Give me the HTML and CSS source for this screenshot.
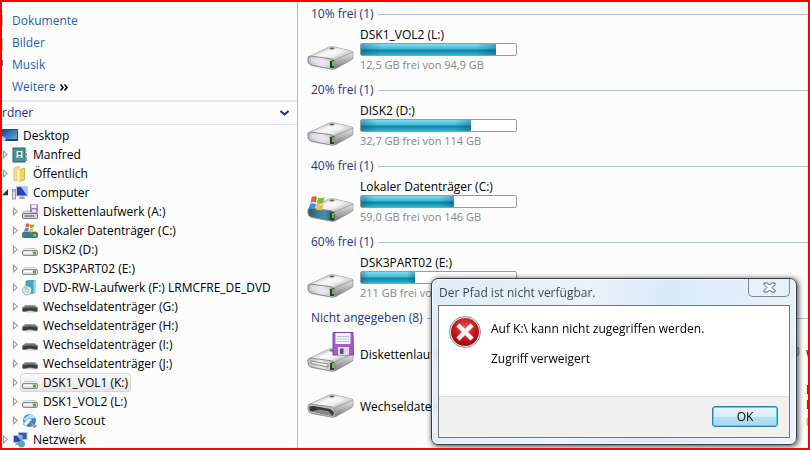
FILE: index.html
```
<!DOCTYPE html>
<html lang="de">
  <head>
    <meta charset="UTF-8" />
    <meta name="viewport" content="width=device-width, initial-scale=1.0" />
    <title>Computer</title>
    <link rel="stylesheet" href="styles.css">
  </head>
  <body>
    <!-- shared icons -->
    <svg class="defs" width="0" height="0" aria-hidden="true">
      <defs>
        <linearGradient id="metal" x1="0" y1="0" x2="1" y2="1">
          <stop offset="0" stop-color="#9d9d9d" />
          <stop offset="0.45" stop-color="#f4f4f4" />
          <stop offset="1" stop-color="#aaa" />
        </linearGradient>
        <linearGradient id="side" x1="0" y1="0" x2="0" y2="1">
          <stop offset="0" stop-color="#e8e8e8" />
          <stop offset="1" stop-color="#777" />
        </linearGradient>
        <linearGradient id="front" x1="0" y1="0" x2="1" y2="0">
          <stop offset="0" stop-color="#b9b9bb" />
          <stop offset="0.5" stop-color="#ececf2" />
          <stop offset="1" stop-color="#b0b0b0" />
        </linearGradient>
        <linearGradient id="teal" x1="0" y1="0" x2="1" y2="0">
          <stop offset="0" stop-color="#2a5b6b" />
          <stop offset="0.6" stop-color="#3f93a8" />
          <stop offset="1" stop-color="#225060" />
        </linearGradient>
        <linearGradient id="screen" x1="0" y1="0" x2="1" y2="1">
          <stop offset="0" stop-color="#1c3fa0" />
          <stop offset="1" stop-color="#6fb4ec" />
        </linearGradient>
        <radialGradient id="red" cx="0.5" cy="0.35" r="0.7">
          <stop offset="0" stop-color="#e85a5a" />
          <stop offset="0.6" stop-color="#c41218" />
          <stop offset="1" stop-color="#8e0a0e" />
        </radialGradient>

        <symbol id="body" viewBox="0 0 48 28">
          <path d="M3 20 L26 26 L46 15 L46 12 L27 26 L4 22Z" fill="#777" opacity="0.5" />
          <path d="M1 13 L22 3 Q25 2 28 3 L45 7 Q47 8 45 9 L27 17 L2 14Z" fill="url(#metal)" stroke="#a0a0a0" stroke-width="0.7" />
          <path d="M9 12 L24 5 L38 8 L25 14Z" fill="#fff" opacity="0.45" />
          <path d="M27 16 L46 8 L46 14 Q46 15 44 16 L28 25Z" fill="url(#side)" stroke="#888" stroke-width="0.6" />
          <ellipse cx="25" cy="4.5" rx="2.5" ry="1" fill="#666" />
        </symbol>
        <symbol id="led" viewBox="0 0 48 28">
          <path d="M23 17 L27 16 L27 24 L23 24Z" fill="#303c2c" />
          <path d="M25 17 L27 17 L27 22 L25 22Z" fill="#4bd02e" />
        </symbol>
        <symbol id="hdd" viewBox="0 0 48 28">
          <use href="#body" />
          <path d="M1 14 Q1 12 4 12 L25 15 Q28 16 28 19 L28 24 Q27 26 24 25 L4 21 Q1 20 1 17Z" fill="url(#front)" stroke="#858585" stroke-width="0.9" />
          <path d="M4 14 L22 17 L22 22 L4 18Z" fill="#e6e6f2" opacity="0.8" />
          <use href="#led" />
        </symbol>
        <symbol id="flag" viewBox="0 0 16 14">
          <path d="M3 1 Q6 -0.5 8 1 L7 6 Q4 5 2 6.500Z" fill="#e4632c" />
          <path d="M9 1.500 Q12 3 15 1 L14 6 Q11 8 8 6.500Z" fill="#7dbb3c" />
          <path d="M1.500 7.500 Q4 6 7 7.500 L6 12 Q3 11 0 12.500Z" fill="#3f8edb" />
          <path d="M8 8 Q11 9.500 14 7.500 L13 12.500 Q10 14 7 12.500Z" fill="#f6bf2c" />
        </symbol>
        <symbol id="hdd-win" viewBox="0 0 48 28">
          <use href="#body" />
          <path d="M1 14 Q1 12 4 12 L25 15 Q28 16 28 19 L28 24 Q27 26 24 25 L4 21 Q1 20 1 17Z" fill="url(#teal)" stroke="#888" stroke-width="1" />
          <use href="#led" />
          <use href="#flag" x="1" y="0" width="18" height="15" />
        </symbol>
        <symbol id="removable" viewBox="0 0 48 28">
          <use href="#body" />
          <path d="M1 14 Q1 12 4 12 L25 15 Q28 16 28 19 L28 24 Q27 26 24 25 L4 21 Q1 20 1 17Z" fill="#bdbdbd" stroke="#8a8a8a" stroke-width="0.800" />
          <path d="M2 15 Q4 13.500 7 14 L23 17 Q26 18 27 21 L26 24 L3 19Z" fill="#383838" />
          <path d="M5 19.500 L12 17.500 L21 19 L26 24Z" fill="#8a8a8a" />
        </symbol>
        <symbol id="disk" viewBox="0 0 22 24">
          <path d="M1 0.500 L21 0.500 L21.500 23 L1 23Z" fill="#a15fc6" stroke="#8343a8" />
          <path d="M3.500 1 H18.500 V12 H3.500Z" fill="#f6f6ff" />
          <path d="M5 4.500 H17 M5 7 H17 M5 9.500 H17" stroke="#b9bdd8" stroke-width="1" />
          <path d="M6 15 H17 V23 H6Z" fill="#dcd9ea" />
          <path d="M8 16.500 H11.500 V22 H8Z" fill="#6c4290" />
        </symbol>
        <symbol id="floppy" viewBox="0 0 48 42">
          <use href="#body" y="14" width="48" height="28" />
          <path d="M1 28 Q1 26 4 26 L25 29 Q28 30 28 33 L28 38 Q27 40 24 39 L4 35 Q1 34 1 31Z" fill="url(#front)" stroke="#858585" stroke-width="0.9" />
          <path d="M4 29 L21 32 L21 35 L4 31.500Z" fill="#eee" stroke="#777" stroke-width="0.8" />
          <use href="#led" y="14" width="48" height="28" />
          <use href="#disk" x="25" y="0" width="22" height="24" />
        </symbol>

        <!-- 16px tree icons -->
        <symbol id="t-hdd" viewBox="0 0 16 16">
          <path d="M3 6.500 H13 L15.500 9 H0.500Z" fill="#f2f2f2" stroke="#bbb" stroke-width="0.8" />
          <rect x="0.500" y="8.500" width="15" height="5" rx="1.500" fill="#dcdcdc" stroke="#8a8a8a" />
          <path d="M2 10.500 H10" stroke="#fff" stroke-width="1.500" />
          <rect x="11" y="9.500" width="3" height="3" fill="#5aa04c" />
        </symbol>
        <symbol id="t-rem" viewBox="0 0 16 16">
          <path d="M3 6.500 H13 L15.500 9 H0.500Z" fill="#777" stroke="#999" stroke-width="0.800" />
          <path d="M0.500 9 Q8 7 15.500 9 L15.500 12 Q15 13 13 12.500 Q8 11 3 12.500 Q1 13 0.500 12Z" fill="#3c3c3c" stroke="#777" stroke-width="0.800" />
          <path d="M3 13.500 Q8 10.500 13 13.500Z" fill="#ccc" />
        </symbol>
        <symbol id="t-floppy" viewBox="0 0 16 16">
          <path d="M3 7 H13 L15.500 9.500 H0.500Z" fill="#dcdce4" stroke="#999" stroke-width="0.800" />
          <path d="M8.500 0.500 H15.500 V8 H8.500Z" fill="#a97bd0" stroke="#8c5cb4" stroke-width="0.600" />
          <path d="M9.500 0.500 H14.500 V4 H9.500Z" fill="#f2f0fb" />
          <path d="M10 5.500 H14 V8 H10Z" fill="#eceaf5" />
          <rect x="0.500" y="9.500" width="15" height="5" rx="1" fill="#d2d2da" stroke="#777" />
          <path d="M2.500 12 H12" stroke="#555" />
        </symbol>
        <symbol id="t-win" viewBox="0 0 16 16">
          <path d="M2 8 H14 L15.500 10 H0.500Z" fill="#ccc" />
          <rect x="0.500" y="9.500" width="15" height="5" rx="1" fill="#347f92" stroke="#5c6c70" />
          <rect x="11.500" y="11" width="2.500" height="2.500" fill="#7bd05a" />
          <use href="#flag" x="2" y="0" width="11" height="10" />
        </symbol>
        <symbol id="t-dvd" viewBox="0 0 16 16">
          <path d="M4 1 L13 0 V13 L4 14Z" fill="#3fa9c4" stroke="#2a87a3" stroke-width="0.700" />
          <path d="M11.500 0.500 L13 0.300 V13 L11.500 13.300Z" fill="#8fd7e6" />
          <circle cx="5" cy="10.500" r="4.500" fill="#dfe7ec" stroke="#8d9ba3" stroke-width="0.800" />
          <path d="M5 10.500 L2 7.500 A4.500 4.500 0 0 1 5.500 6Z" fill="#a9d2b0" />
          <circle cx="5" cy="10.500" r="1.500" fill="#fff" stroke="#8d9ba3" stroke-width="0.700" />
        </symbol>
        <symbol id="t-nero" viewBox="0 0 16 16">
          <circle cx="7.500" cy="7.500" r="6.500" fill="#2e86cf" />
          <path d="M1.500 6 Q5 3 8 1 Q12 1 13.500 5 Q9 5 6 8 Q3 9 1.500 6Z" fill="#b9def5" />
          <path d="M0.500 11 L7 5 L10 7 L4 13Z" fill="#e8f3fb" stroke="#6ca6d2" stroke-width="0.700" />
          <path d="M8 8 L14.500 13 L12.500 15 L9 11Z" fill="#9aa7b1" stroke="#69747c" stroke-width="0.600" />
        </symbol>
        <symbol id="t-desktop" viewBox="0 0 16 16">
          <rect x="0.500" y="1.500" width="15" height="11" fill="url(#screen)" stroke="#2a4d86" />
          <path d="M0 11 H15 V13 H0Z" fill="#27456f" />
          <path d="M0 8 Q3 9 4 11 L3 13 H0Z" fill="#a9d0ee" />
        </symbol>
        <symbol id="t-user" viewBox="0 0 16 16">
          <rect x="1" y="1" width="12" height="14" fill="#4b9196" stroke="#276168" />
          <rect x="4.500" y="4" width="6" height="7" fill="#d9ece8" />
          <circle cx="7.500" cy="6.500" r="1.500" fill="#47606b" />
          <path d="M5.500 10.500 Q7.500 7.500 9.500 10.500Z" fill="#47606b" />
          <path d="M13.500 2 H15 V5 H13.500Z" fill="#eac94c" />
          <path d="M13.500 6 H15 V9 H13.500Z" fill="#74b84e" />
          <path d="M13.500 10 H15 V14 H13.500Z" fill="#5d9bd8" />
        </symbol>
        <symbol id="t-folder" viewBox="0 0 16 16">
          <path d="M2 2 L7 0.500 V14 L2 14.500Z" fill="#f8e391" stroke="#d6b34c" stroke-width="0.800" />
          <path d="M7 4 L12.500 2 V14 L7 15Z" fill="#f3d465" stroke="#d1a93c" stroke-width="0.800" />
          <path d="M5 2.500 L8 3.500 V15.500 L5 14.500Z" fill="#fff6c8" stroke="#dfc36a" stroke-width="0.600" />
        </symbol>
        <symbol id="t-computer" viewBox="0 0 16 16">
          <rect x="0.500" y="4.500" width="3" height="9.500" fill="#d9dde1" stroke="#8a939b" stroke-width="0.800" />
          <path d="M1 6 H3" stroke="#58b45a" />
          <path d="M4.500 1.500 H15.500 V11 H4.500Z" fill="#2743c4" stroke="#c5cbd4" />
          <path d="M9 2 H15 V10.500Z" fill="#a9c5f0" />
          <path d="M8 11.500 H12 L13 14 H7Z" fill="#9aa3ae" />
        </symbol>
        <symbol id="t-net" viewBox="0 0 16 16">
          <rect x="6.500" y="0.500" width="8.500" height="7" fill="#3457c8" stroke="#b6bfd0" />
          <rect x="1.500" y="3.500" width="8.500" height="7" fill="#2a49b8" stroke="#b6bfd0" />
          <path d="M5 4 H9.500 V9Z" fill="#8fb4f2" />
          <path d="M4 11 H8 L9 13 H3Z" fill="#9aa3ae" />
          <circle cx="9.500" cy="12" r="3.500" fill="#4aa9d8" />
          <path d="M7 11 Q9 9 10.500 11 Q10 13 9 15 Q6.500 13.500 7 11Z" fill="#68b75b" />
        </symbol>
      </defs>
    </svg>

    <div class="window">
      <aside class="sidebar">
        <nav class="favorites">
          <a href="#">Dokumente</a>
          <a href="#">Bilder</a>
          <a href="#">Musik</a>
          <a href="#">Weitere
            <svg class="more" viewBox="0 0 8 7"><path d="M0.500 0.500 L3 3.500 L0.500 6.500 M4.500 0.500 L7 3.500 L4.500 6.500" fill="none" stroke="#000" stroke-width="1.500" /></svg>
          </a>
          <span class="sliver sliver-doc"></span>
          <span class="sliver sliver-pic"></span>
          <span class="sliver sliver-note"></span>
        </nav>
        <button class="folders-head" type="button">
          rdner
          <svg class="chevron" viewBox="0 0 9 6"><path d="M0.500 1 L4.500 4.500 L8.500 1" fill="none" stroke="#15347f" stroke-width="2" /></svg>
        </button>
        <ul class="tree">
          <li><svg class="icon"><use href="#t-desktop" /></svg><span>Desktop</span></li>
          <li><i class="arrow"></i><svg class="icon"><use href="#t-user" /></svg><span>Manfred</span></li>
          <li><i class="arrow"></i><svg class="icon"><use href="#t-folder" /></svg><span>Öffentlich</span></li>
          <li><i class="arrow open"></i><svg class="icon"><use href="#t-computer" /></svg><span>Computer</span></li>
          <li class="level2"><i class="arrow"></i><svg class="icon"><use href="#t-floppy" /></svg><span>Diskettenlaufwerk (A:)</span></li>
          <li class="level2"><i class="arrow"></i><svg class="icon"><use href="#t-win" /></svg><span>Lokaler Datenträger (C:)</span></li>
          <li class="level2"><i class="arrow"></i><svg class="icon"><use href="#t-hdd" /></svg><span>DISK2 (D:)</span></li>
          <li class="level2"><i class="arrow"></i><svg class="icon"><use href="#t-hdd" /></svg><span>DSK3PART02 (E:)</span></li>
          <li class="level2"><i class="arrow"></i><svg class="icon"><use href="#t-dvd" /></svg><span>DVD-RW-Laufwerk (F:) LRMCFRE_DE_DVD</span></li>
          <li class="level2"><i class="arrow"></i><svg class="icon"><use href="#t-rem" /></svg><span>Wechseldatenträger (G:)</span></li>
          <li class="level2"><i class="arrow"></i><svg class="icon"><use href="#t-rem" /></svg><span>Wechseldatenträger (H:)</span></li>
          <li class="level2"><i class="arrow"></i><svg class="icon"><use href="#t-rem" /></svg><span>Wechseldatenträger (I:)</span></li>
          <li class="level2"><i class="arrow"></i><svg class="icon"><use href="#t-rem" /></svg><span>Wechseldatenträger (J:)</span></li>
          <li class="level2"><i class="arrow"></i><div class="selected"><svg class="icon"><use href="#t-hdd" /></svg><span>DSK1_VOL1 (K:)</span></div></li>
          <li class="level2"><i class="arrow"></i><svg class="icon"><use href="#t-hdd" /></svg><span>DSK1_VOL2 (L:)</span></li>
          <li class="level2"><i class="arrow"></i><svg class="icon"><use href="#t-nero" /></svg><span>Nero Scout</span></li>
          <li><i class="arrow"></i><svg class="icon"><use href="#t-net" /></svg><span>Netzwerk</span></li>
        </ul>
      </aside>

      <main class="drives">
        <section class="group">
          <h2>10% frei (1)</h2>
          <div class="drive">
            <svg class="drive-icon"><use href="#hdd" /></svg>
            <div class="info">
              <span>DSK1_VOL2 (L:)</span>
              <div class="bar"><div class="fill" style="width: 87%"></div></div>
              <span class="free">12,5 GB frei von 94,9 GB</span>
            </div>
          </div>
        </section>
        <section class="group">
          <h2>20% frei (1)</h2>
          <div class="drive">
            <svg class="drive-icon"><use href="#hdd" /></svg>
            <div class="info">
              <span>DISK2 (D:)</span>
              <div class="bar"><div class="fill" style="width: 71%"></div></div>
              <span class="free">32,7 GB frei von 114 GB</span>
            </div>
          </div>
        </section>
        <section class="group">
          <h2>40% frei (1)</h2>
          <div class="drive">
            <svg class="drive-icon"><use href="#hdd-win" /></svg>
            <div class="info">
              <span>Lokaler Datenträger (C:)</span>
              <div class="bar"><div class="fill" style="width: 60%"></div></div>
              <span class="free">59,0 GB frei von 146 GB</span>
            </div>
          </div>
        </section>
        <section class="group">
          <h2>60% frei (1)</h2>
          <div class="drive">
            <svg class="drive-icon"><use href="#hdd" /></svg>
            <div class="info">
              <span>DSK3PART02 (E:)</span>
              <div class="bar"><div class="fill" style="width: 35%"></div></div>
              <span class="free">211 GB frei vo</span>
            </div>
          </div>
        </section>
        <section class="group">
          <h2>Nicht angegeben (8)</h2>
          <div class="tiles">
            <div class="drive plain">
              <svg class="drive-icon tall"><use href="#floppy" /></svg>
              <div class="info"><span>Diskettenlaufw</span></div>
            </div>
            <div class="drive plain">
              <svg class="drive-icon"><use href="#removable" /></svg>
              <div class="info"><span>W</span></div>
            </div>
            <div class="drive plain">
              <svg class="drive-icon"><use href="#removable" /></svg>
              <div class="info"><span>Wechseldaten</span></div>
            </div>
            <div class="drive plain no-icon">
              <div class="info"><span>D</span><span>L</span><span class="free">(</span></div>
            </div>
          </div>
        </section>
      </main>

      <div class="dialog" role="dialog" aria-labelledby="dialogTitle">
        <header class="titlebar">
          <span id="dialogTitle">Der Pfad ist nicht verfügbar.</span>
          <button class="close" type="button" aria-label="Schließen">
            <svg viewBox="0 0 13 11"><path d="M1 1 H4.500 L6.500 3 L8.500 1 H12 V2.500 L9 5.500 L12 8.500 V10 H8.500 L6.500 8 L4.500 10 H1 V8.500 L4 5.500 L1 2.500Z" fill="#fff" stroke="#4c5666" /></svg>
          </button>
        </header>
        <div class="dialog-body">
          <div class="message">
            <svg class="error" viewBox="0 0 32 32">
              <circle cx="16" cy="16" r="15.500" fill="#f3f3f3" stroke="#8d8d8d" />
              <circle cx="16" cy="16" r="14" fill="url(#red)" />
              <path d="M10.500 10.500 L21.500 21.500 M21.500 10.500 L10.500 21.500" stroke="#f4f4f4" stroke-width="4.500" stroke-linecap="square" />
            </svg>
            <div class="message-text">
              <p>Auf K:\ kann nicht zugegriffen werden.</p>
              <p>Zugriff verweigert</p>
            </div>
          </div>
          <footer class="actions"><button class="ok" type="button">OK</button></footer>
        </div>
      </div>
    </div>
  </body>
</html>
```
FILE: styles.css
```
* {
  box-sizing: border-box;
}
body {
  margin: 0;
  font-family: "Open Sans", "Noto Sans", sans-serif;
  font-size: 12px;
  line-height: 16px;
  color: #000;
}
button {
  font: inherit;
}
.defs {
  position: absolute;
}
.window {
  position: relative;
  display: flex;
  height: 100vh;
  border: 2px solid #f00;
  background-color: #fcfcfc;
  overflow: hidden;
}

/* left pane */
.sidebar {
  flex: 0 0 296px;
  border-right: 1px solid #a9b9c9;
}
.favorites {
  position: relative;
  display: flex;
  flex-direction: column;
  align-items: flex-start;
  padding: 8px 10px 0;
  height: 100px;
  border-bottom: 2px solid #e6eaef;
}
.favorites a {
  color: #1f5fb4;
  line-height: 22px;
  text-decoration: none;
}
.more {
  width: 8px;
  height: 7px;
  margin-left: 1px;
}
.sliver {
  position: absolute;
  left: 0;
  width: 1px;
  height: 11px;
  background-color: #b0b0b0;
}
.sliver-doc {
  top: 13px;
}
.sliver-pic {
  top: 37px;
  background-color: #b5b5a0;
}
.sliver-note {
  top: 58px;
  height: 6px;
  background-color: #4a7d94;
}
.folders-head {
  display: flex;
  justify-content: space-between;
  align-items: center;
  width: 100%;
  height: 23px;
  padding: 0 8px 0 0;
  border: 0;
  border-bottom: 1px solid #d8e2ec;
  background: none;
  color: #1e3287;
}
.chevron {
  width: 9px;
  height: 6px;
}
.tree {
  margin: 0;
  padding: 1px 0 0;
  list-style: none;
}
.tree li,
.selected {
  display: flex;
  align-items: center;
  height: 19px;
  white-space: nowrap;
}
.icon {
  flex: none;
  width: 16px;
  height: 16px;
  margin-right: 5px;
}
.level2 {
  padding-left: 10px;
}
.arrow {
  flex: none;
  width: 10px;
  height: 9px;
  background-color: #999;
  clip-path: polygon(10% 0, 60% 50%, 10% 100%, 10% 0, 20% 25%, 20% 75%, 45% 50%, 20% 25%);
}
.arrow.open {
  background-color: #333;
  clip-path: polygon(60% 10%, 60% 80%, 0 80%);
}
.selected {
  margin-left: -2px;
  padding: 0 2px 0 1px;
  border: 1px solid #d6d6d6;
  border-radius: 3px;
  background-image: linear-gradient(#fafafa, #e6e6e6);
}

/* drive list */
.drives {
  flex: 1;
  min-width: 0;
  padding: 2px 0 0 13px;
}
.group h2 {
  display: flex;
  align-items: center;
  gap: 4px;
  margin: 0;
  height: 20px;
  font-size: 12px;
  font-weight: normal;
  color: #1e3287;
}
.group h2::after {
  content: "";
  flex: 1;
  height: 1px;
  background-color: #b0bfd2;
}
.drive {
  display: flex;
  height: 56px;
}
.drive-icon {
  flex: none;
  width: 48px;
  height: 28px;
  margin: 20px 5px 0 -4px;
}
.info {
  display: flex;
  flex-direction: column;
  width: 157px;
  padding-top: 3px;
  white-space: nowrap;
}
.bar {
  height: 13px;
  border: 1px solid #9a9a9a;
  border-radius: 2px;
  background-color: #fff;
}
.fill {
  height: 100%;
  background-image: linear-gradient(90deg, rgba(0, 70, 100, 0.35), transparent 15%, transparent 85%, rgba(0, 70, 100, 0.35)),
    linear-gradient(#7fdcf0, #3fb8d8 45%, #10809f 55%, #2fb6d0);
}
.free {
  font-size: 11px;
  line-height: 18px;
  color: #868686;
}
.tiles {
  display: grid;
  grid-template-columns: 446px 446px;
}
.plain {
  height: 52px;
  align-items: center;
}
.plain .drive-icon {
  margin-top: 0;
}
.plain .info {
  padding: 0;
  line-height: 15px;
}
.no-icon {
  padding-left: 49px;
}
.plain .drive-icon.tall {
  height: 42px;
  margin-bottom: 2px;
}

/* message box */
.dialog {
  position: absolute;
  right: 11px;
  bottom: 3px;
  width: 366px;
  padding: 0 6px 6px;
  border: 1px solid #343c44;
  border-radius: 7px;
  background-image: linear-gradient(100deg, rgba(220, 234, 247, 0.9), rgba(232, 241, 250, 0.9) 40%, rgba(215, 231, 247, 0.9) 60%, rgba(232, 242, 251, 0.9));
  backdrop-filter: blur(2px);
  box-shadow: inset 0 0 0 1px #f6fbff, 1px 1px 5px 1px rgba(0, 0, 0, 0.6);
}
.titlebar {
  display: flex;
  justify-content: space-between;
  height: 26px;
  padding-left: 1px;
  line-height: 27px;
  color: #3c4a55;
}
.close {
  display: flex;
  justify-content: center;
  align-items: center;
  width: 42px;
  height: 18px;
  padding: 0;
  border: 1px solid #7d8894;
  border-top: 0;
  border-radius: 0 0 5px 5px;
  background-color: #e6f0f9;
}
.close svg {
  width: 13px;
  height: 11px;
}
.dialog-body {
  border: 1px solid #6c7a88;
  background-color: #fff;
}
.message {
  display: flex;
  gap: 10px;
  height: 90px;
  padding: 10px;
}
.error {
  flex: none;
  width: 32px;
  height: 32px;
}
.message-text p {
  margin: 5px 0 14px;
}
.actions {
  display: flex;
  justify-content: flex-end;
  padding: 9px 11px 10px;
  border-top: 1px solid #dfdfdf;
  background-color: #f0f0f0;
}
.ok {
  width: 66px;
  height: 21px;
  padding: 0;
  border: 1px solid #2c7fa8;
  border-radius: 3px;
  background-image: linear-gradient(#eaf6fc, #d5edf9 50%, #b8e0f5 50%, #a9daf2);
  box-shadow: inset 0 0 0 1px #4fd2f5;
  line-height: 17px;
}
```
